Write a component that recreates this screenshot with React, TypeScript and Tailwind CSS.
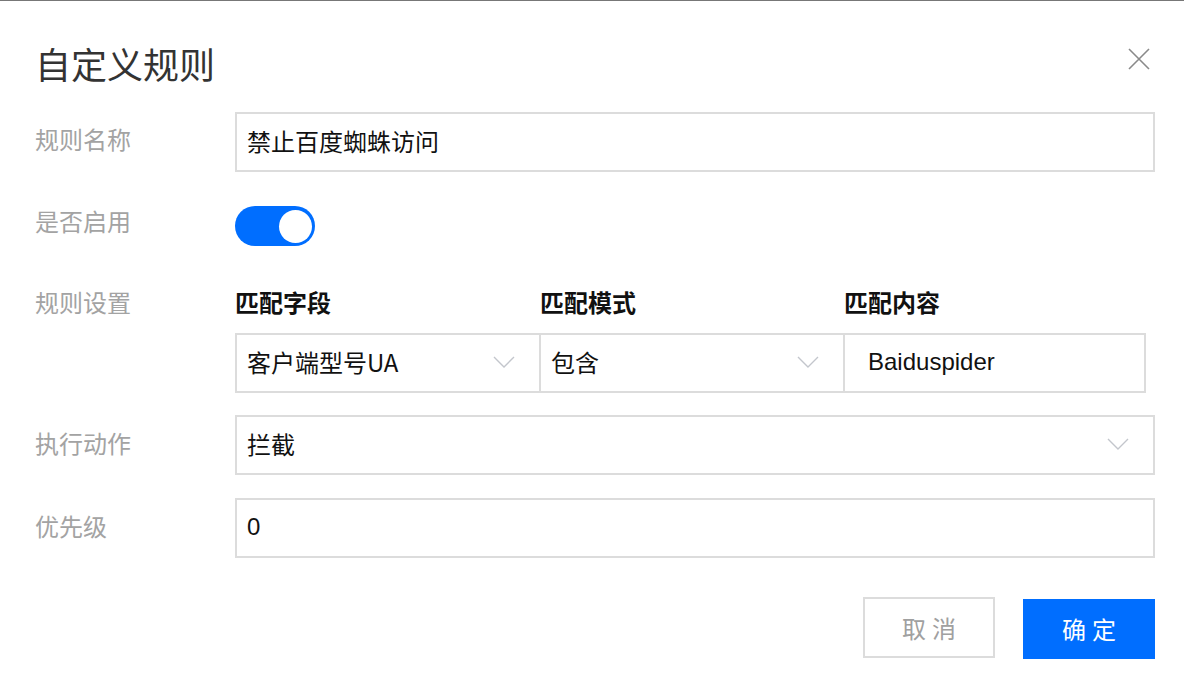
import React from "react";

const font = { fontFamily: '"Microsoft YaHei", "Noto Sans CJK SC", "Liberation Sans", sans-serif' };
const latin = { fontFamily: '"Liberation Sans", "Noto Sans CJK SC", sans-serif' };

function Chevron() {
  return (
    <svg width="22" height="12" viewBox="0 0 22 12" fill="none">
      <path d="M1 1 L11 11 L21 1" stroke="#c3c6cc" strokeWidth="1.4" />
    </svg>
  );
}

function Label({ children, lift = "pb-[3px]" }: { children: React.ReactNode; lift?: string }) {
  return (
    <div className={`w-[200px] shrink-0 text-[24px] leading-none text-[#a3a3a3] ${lift}`}>{children}</div>
  );
}

export default function App() {
  return (
    <div
      className="h-[698px] w-[1184px] overflow-hidden border-t border-[#777] bg-white pl-[35px] pr-[29px]"
      style={font}
    >
      <div className="flex items-start justify-between pt-[44px]">
        <h1 className="text-[36px] font-normal leading-none text-[#333]">自定义规则</h1>
        <button type="button" aria-label="Close" className="mr-[5px] mt-[3px]">
          <svg width="22" height="22" viewBox="0 0 22 22" fill="none">
            <path d="M1 1 L21 21 M21 1 L1 21" stroke="#8a8a8a" strokeWidth="1.6" />
          </svg>
        </button>
      </div>

      <div className="mt-[31px] flex items-center">
        <Label lift="pb-[6px]">规则名称</Label>
        <div className="flex h-[60px] flex-1 items-center border-2 border-[#dcdcdc] px-[10px] pb-[2px] text-[24px] text-[#111]">
          禁止百度蜘蛛访问
        </div>
      </div>

      <div className="mt-[34px] flex items-center">
        <Label lift="pb-[10px]">是否启用</Label>
        <div className="flex h-[40px] w-[80px] items-center justify-end rounded-full bg-[#006eff] pr-[3px]">
          <div className="h-[33px] w-[33px] rounded-full bg-white" />
        </div>
      </div>

      <div className="mt-[44px] flex items-start">
        <Label>规则设置</Label>
        <div className="flex-1">
          <div className="flex text-[24px] font-bold leading-none text-[#111]">
            <div className="w-[305px]">匹配字段</div>
            <div className="w-[304px]">匹配模式</div>
            <div>匹配内容</div>
          </div>
          <div className="mt-[19px] flex h-[60px] text-[24px] text-[#111]">
            <div className="flex w-[306px] items-center justify-between border-2 border-[#dcdcdc] pb-[2px] pl-[10px] pr-[24px]">
              <span>客户端型号UA</span>
              <Chevron />
            </div>
            <div className="-ml-[2px] flex w-[306px] items-center justify-between border-2 border-[#dcdcdc] pb-[2px] pl-[10px] pr-[24px]">
              <span>包含</span>
              <Chevron />
            </div>
            <div
              className="-ml-[2px] flex w-[303px] items-center border-2 border-[#dcdcdc] pb-[2px] pl-[23px] text-[24px]"
              style={latin}
            >
              Baiduspider
            </div>
          </div>
        </div>
      </div>

      <div className="mt-[22px] flex items-center">
        <Label lift="pb-[4px]">执行动作</Label>
        <div className="flex h-[60px] flex-1 items-center justify-between border-2 border-[#dcdcdc] pb-[2px] pl-[10px] pr-[24px] text-[24px] text-[#111]">
          <span>拦截</span>
          <Chevron />
        </div>
      </div>

      <div className="mt-[23px] flex items-center">
        <Label lift="pb-[4px]">优先级</Label>
        <div
          className="flex h-[60px] flex-1 items-center border-2 border-[#dcdcdc] px-[10px] pb-[2px] text-[24px] text-[#111]"
          style={latin}
        >
          0
        </div>
      </div>

      <div className="mt-[39px] flex items-start justify-end gap-[28px]">
        <button
          type="button"
          className="flex h-[61px] w-[132px] items-center justify-center border-2 border-[#dcdcdc] text-[24px] tracking-[6px] text-[#a0a0a0]"
        >
          <span className="pl-[6px]">取消</span>
        </button>
        <button
          type="button"
          className="mt-[2px] flex h-[60px] w-[132px] items-center justify-center bg-[#006eff] text-[24px] tracking-[6px] text-white"
        >
          <span className="pl-[6px]">确定</span>
        </button>
      </div>
    </div>
  );
}
